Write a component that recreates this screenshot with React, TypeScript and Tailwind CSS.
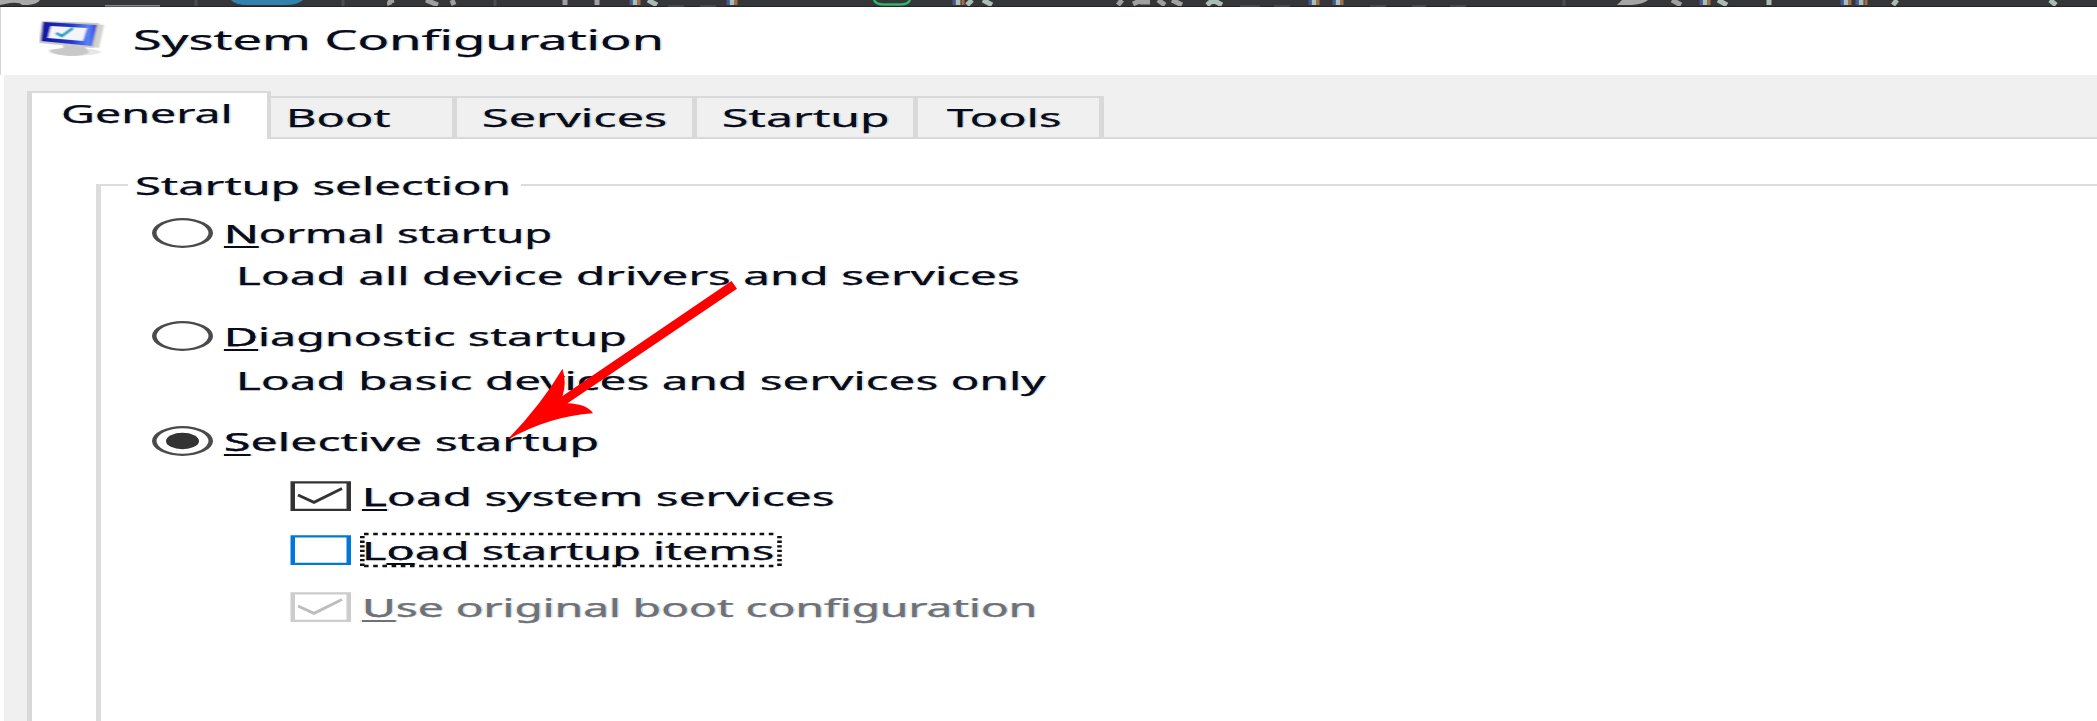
import { useLayoutEffect, useRef, useState, type ReactNode } from "react";

/* Text line whose glyphs are stretched horizontally to fill the given width. */
function Fit({ w, children, className = "" }: { w: number; children: ReactNode; className?: string }) {
  const ref = useRef<HTMLSpanElement>(null);
  const [scale, setScale] = useState(1);
  useLayoutEffect(() => {
    if (ref.current) setScale(w / ref.current.offsetWidth);
  }, [w]);
  return (
    <span className="block h-9" style={{ width: w }}>
      <span
        ref={ref}
        className={`inline-block origin-left whitespace-nowrap leading-9 [-webkit-text-stroke:0.25px_currentColor] [text-shadow:-1px_0_rgba(255,190,60,0.4),1px_0_rgba(60,190,255,0.4)] ${className}`}
        style={{ transform: `scaleX(${scale})` }}
      >
        {children}
      </span>
    </span>
  );
}

/* Access-key letter. */
function U({ children }: { children: ReactNode }) {
  return (
    <span className="underline decoration-2 underline-offset-[3px] [text-decoration-skip-ink:none]">{children}</span>
  );
}

function Radio({ on = false }: { on?: boolean }) {
  return (
    <svg className="h-[30px] w-[61px] shrink-0" viewBox="0 0 61 30">
      <path
        fillRule="evenodd"
        fill="#4a4a4a"
        d="M30.500 0A30.500 15 0 1 1 30.500 30A30.500 15 0 1 1 30.500 0ZM30.500 2.300A26 12.700 0 1 0 30.500 27.700A26 12.700 0 1 0 30.500 2.300Z"
      />
      {on && <ellipse cx="30.500" cy="15" rx="16.500" ry="8.300" fill="#333" />}
    </svg>
  );
}

function Check({ box, mark }: { box: string; mark?: string }) {
  return (
    <svg className="h-[30px] w-[61px] shrink-0" viewBox="0 0 61 30">
      <path fillRule="evenodd" fill={box} d="M0.500 0.300H61V30H0.500ZM5 2.600V27.700H56.500V2.600Z" />
      {mark && <path d="M8 14L24 21.300L52 7.500" fill="none" stroke={mark} strokeWidth="3" />}
    </svg>
  );
}

function Tab({ w, tw, pad, children }: { w: string; tw: number; pad: string; children: string }) {
  return (
    <div className={`h-[41px] border-r-[5px] border-t-2 border-[#d9d9d9] ${w} ${pad}`}>
      <Fit w={tw}>{children}</Fit>
    </div>
  );
}

export default function App() {
  return (
    <div className="relative flex h-[721px] w-[2097px] flex-col overflow-hidden bg-white font-['Noto_Sans','Open_Sans',sans-serif] text-[26px] text-[#0a0a1e]">
      <div className="h-[7px] shrink-0 bg-[#343638]">
        <svg className="block h-[7px] w-[2097px]" viewBox="0 0 2097 7">
          <path d="M0 0H40Q38 4 28 5H22Q20 2 10 3L0 5Z" fill="#a9a9a9" />
          <path d="M231 0H303Q298 5 285 5H248Q235 5 231 0Z" fill="#3282b1" />
          <path d="M196 0V6M343 0V6M495 0V6M1564 0V6" stroke="#4a4c4e" strokeWidth="3" />
          <path
            d="M394 0Q388 1 390 5M426 0L438 5M452 0L454 5M565 0V5M597 0V5M1118 5L1122 0M1133 4L1142 0M1140 2H1150M1158 0L1165 5M1172 0L1182 5M1672 0L1681 5"
            stroke="#a0a0a0"
            strokeWidth="5"
            fill="none"
          />
          <path d="M1617 5L1622 0H1648Q1644 4 1632 5Z" fill="#a5a5a5" />
          <path
            d="M635 0V5M648 0L657 5M732 0V5M958 0V5M972 0L967 5M983 0L992 5M1207 5L1213 0L1222 5M1314 0V5M1338 0V5M1705 0V5M1718 0L1727 5M1769 0V5M1846 0V5M1861 0V5M1897 0L1893 5M2050 0L2056 5"
            stroke="#a9bdb4"
            strokeWidth="5"
            fill="none"
          />
          <path d="M631 0V5M728 0V5M954 0V5M1310 0V5M1334 0V5M1701 0V5M1842 0V5M1857 0V5" stroke="#44579a" strokeWidth="3" />
          <path d="M639 0V5M736 0V5M963 0V5M1318 0V5M1342 0V5M1709 0V5M1850 0V5M1866 0V5" stroke="#a56a45" strokeWidth="3" />
          <path d="M874 0Q876 4.500 884 4.500H900Q908 4.500 910 0" stroke="#32b468" strokeWidth="2.500" fill="none" />
          <path d="M0 6H2097V7H0Z" fill="#242424" />
          <path d="M105 5H160V6.500H105Z" fill="#888" />
          <path d="M668 5.500H684V6.500H668ZM700 5.500H716V6.500H700ZM1240 5.500H1260V6.500H1240ZM1274 5.500H1290V6.500H1274ZM1370 5.500H1386V6.500H1370ZM1412 5.500H1426V6.500H1412ZM1450 5.500H1466V6.500H1450Z" fill="#5c5c5c" />
        </svg>
      </div>
      <header className="flex h-[68px] shrink-0 border-l border-[#d5d5d5] pl-[38px]">
        <svg className="mt-[12px] h-[42px] w-[70px]" viewBox="0 0 70 42">
          <defs>
            <linearGradient id="frame">
              <stop offset="0" stopColor="#1012a0" />
              <stop offset="0.550" stopColor="#2238cf" />
              <stop offset="0.850" stopColor="#5a82f8" />
              <stop offset="1" stopColor="#2c40d0" />
            </linearGradient>
            <filter id="soft">
              <feGaussianBlur stdDeviation="0.9 0.6" />
            </filter>
          </defs>
          <g filter="url(#soft)">
            <ellipse cx="36" cy="33" rx="26" ry="3.500" fill="#e6e6e6" />
            <path d="M24 26L46 28L50 33Q46 37 32 37Q14 36 10 31L24 29Z" fill="#c8c8c8" />
            <path d="M58 5L65 6L60 29L54 28Z" fill="#d4d2cd" />
            <path d="M3 2L60 4L55 29L0 24Z" fill="#cbc8c2" />
            <path d="M4 3L58 6L53 27L2 22Z" fill="url(#frame)" />
            <path d="M12 7L48 9L44 22L9 19Z" fill="#f4f5f8" />
            <path d="M17 14L23 17L34 9" stroke="#28a4ce" strokeWidth="3" fill="none" />
          </g>
        </svg>
        <div className="pl-[24px] pt-[11px] text-[28px]">
          <Fit w={531}>System Configuration</Fit>
        </div>
      </header>
      <main className="ml-[4px] flex grow flex-col bg-[#f0f0f0] pl-[22.500px] pt-[16px]">
        <nav className="flex h-[48px] shrink-0 items-end">
          <div className="h-[48px] w-[244.500px] border-l-[5px] border-r-[4px] border-t-2 border-[#d9d9d9] bg-white pl-[29px] pt-[1px]">
            <Fit w={172}>General</Fit>
          </div>
          <div className="flex h-[43px] grow items-start border-b-2 border-[#d9d9d9]">
            <Tab w="w-[186px]" pad="pl-[15px]" tw={105}>Boot</Tab>
            <Tab w="w-[240px]" pad="pl-[25px]" tw={185}>Services</Tab>
            <Tab w="w-[221px]" pad="pl-[25px]" tw={167}>Startup</Tab>
            <Tab w="w-[186px]" pad="pl-[29px]" tw={114}>Tools</Tab>
          </div>
        </nav>
        <section className="flex grow flex-col border-l-[5px] border-[#d9d9d9] bg-white pl-[64px]">
          <div className="flex h-[64px] shrink-0 items-start">
            <div className="mt-[45px] h-[19px] w-[32px] border-l-[5px] border-t-2 border-[#dcdcdc]" />
            <div className="ml-[7.500px] mt-[27px] w-[386px]">
              <Fit w={376}>Startup selection</Fit>
            </div>
            <div className="mt-[45px] h-[2px] grow bg-[#dcdcdc]" />
          </div>
          <div className="flex grow flex-col border-l-[5px] border-[#dcdcdc] pl-[51px] pt-[15px]">
            <div className="flex h-[41px] items-start">
              <Radio />
              <div className="-mt-[4px] ml-[11px]"><Fit w={328}><U>N</U>ormal startup</Fit></div>
            </div>
            <div className="-mt-[3px] h-[65px] pl-[84px]"><Fit w={783}>Load all device drivers and services</Fit></div>
            <div className="flex h-[43px] items-start">
              <Radio />
              <div className="-mt-[4px] ml-[11px]"><Fit w={402}><U>D</U>iagnostic startup</Fit></div>
            </div>
            <div className="-mt-[3px] h-[65px] pl-[84px]"><Fit w={809}>Load basic devices and services only</Fit></div>
            <div className="flex h-[55px] items-start">
              <Radio on />
              <div className="-mt-[4px] ml-[11px]"><Fit w={375}><U>S</U>elective startup</Fit></div>
            </div>
            <div className="ml-[138px] flex h-[54px] items-start">
              <Check box="#333" mark="#333" />
              <div className="-mt-[4px] ml-[11px]"><Fit w={472}><U>L</U>oad system services</Fit></div>
            </div>
            <div className="ml-[138px] flex h-[57px] items-start">
              <Check box="#0078d7" />
              <div className="relative -mt-[4px] ml-[11px]">
                <Fit w={413}>L<U>o</U>ad startup items</Fit>
                <svg className="absolute -left-[2px] top-[1px] h-[36px] w-[422px]" viewBox="0 0 422 36">
                  <path d="M4 2H418M4 34H418" stroke="#111" strokeWidth="2.300" strokeDasharray="4.600 4.600" fill="none" />
                  <path d="M2.300 4V34M419.500 4V34" stroke="#111" strokeWidth="4.600" strokeDasharray="2.300 2.300" fill="none" />
                </svg>
              </div>
            </div>
            <div className="ml-[138px] flex h-[50px] items-start text-[#70707c]">
              <Check box="#ccc" mark="#bdbdbd" />
              <div className="-mt-[4px] ml-[11px]"><Fit w={675}><U>U</U>se original boot configuration</Fit></div>
            </div>
          </div>
        </section>
      </main>
      <svg className="pointer-events-none absolute left-[500px] top-[270px] h-[180px] w-[250px]" viewBox="500 270 250 180">
        <path
          d="M731.500 281L737 288.700L567.500 403.300Q587 404 593 413.300Q550 416 507 440Q541 405 562.500 368.700Q567 383 562.500 396Z"
          fill="#f00"
        />
      </svg>
    </div>
  );
}
